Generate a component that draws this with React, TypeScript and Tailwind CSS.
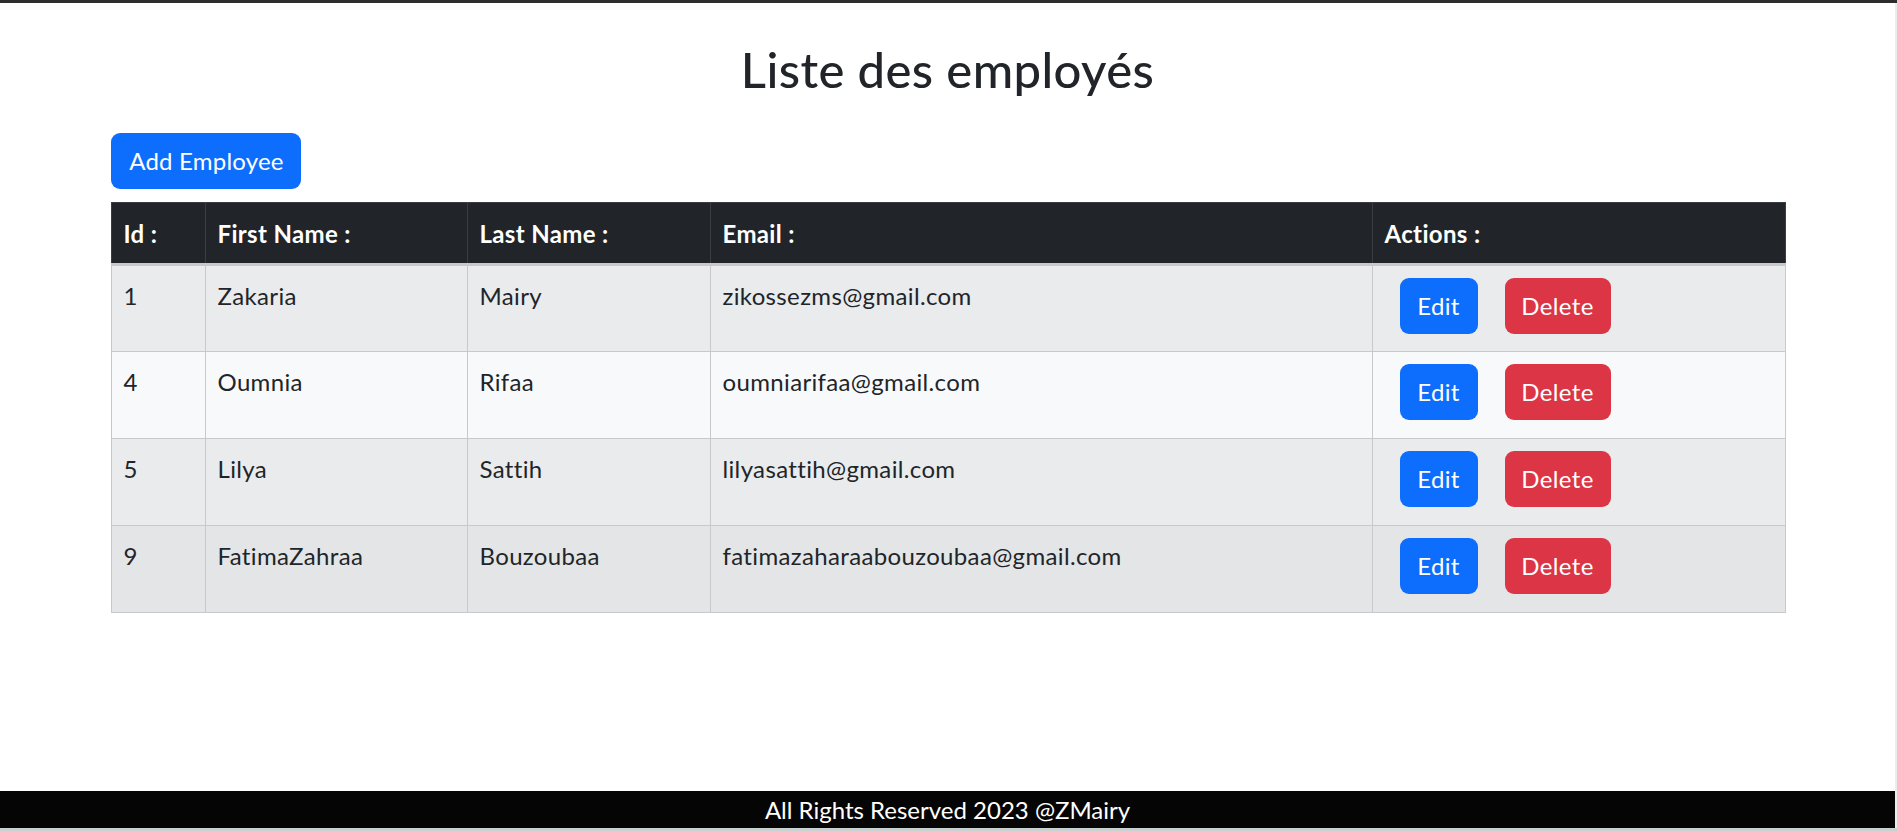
const employees = [
  { id: 1, firstName: "Zakaria", lastName: "Mairy", email: "zikossezms@gmail.com", bg: "bg-[#eaebed]" },
  { id: 4, firstName: "Oumnia", lastName: "Rifaa", email: "oumniarifaa@gmail.com", bg: "bg-[#f8f9fa]" },
  { id: 5, firstName: "Lilya", lastName: "Sattih", email: "lilyasattih@gmail.com", bg: "bg-[#eaebed]" },
  { id: 9, firstName: "FatimaZahraa", lastName: "Bouzoubaa", email: "fatimazaharaabouzoubaa@gmail.com", bg: "bg-[#e4e5e7]" },
];

const headers = ["Id :", "First Name :", "Last Name :", "Email :", "Actions :"];

export default function App() {
  return (
    <div className="flex h-[831px] w-[1897px] flex-col overflow-hidden bg-white font-['Lato',sans-serif] text-[24px] leading-[36px] tracking-[0.35px] text-[#212529]">
      <div className="h-[3px] bg-[#2d2d2d]" />
      <div className="flex flex-1">
        <div className="flex flex-1 flex-col">
          <h2 className="mt-[37px] text-center text-[49px] font-medium leading-[58px] tracking-[0.4px]">Liste des employés</h2>

          <div className="mx-auto mt-[35px] w-[1674px]">
            <button className="h-[56px] w-[190px] rounded-[9px] bg-[#0d6efd] pl-[2px] text-[24px] tracking-[0.2px] text-white">Add Employee</button>

            <table className="mt-[13px] w-full table-fixed border-collapse">
              <colgroup>
                <col className="w-[94px]" />
                <col className="w-[262px]" />
                <col className="w-[243px]" />
                <col className="w-[662px]" />
                <col className="w-[413px]" />
              </colgroup>
              <thead>
                <tr>
                  {headers.map((h) => (
                    <th
                      key={h}
                      className="h-[62px] border border-b-[3px] border-[#3a3e42] border-b-[#c8c9cb] bg-[#212529] px-3 pt-[1px] text-left align-middle font-bold text-white"
                    >
                      {h}
                    </th>
                  ))}
                </tr>
              </thead>
              <tbody>
                {employees.map((e) => (
                  <tr key={e.id} className={e.bg}>
                    <td className="h-[87px] border border-[#c8c9cb] px-3 pt-3 align-top">{e.id}</td>
                    <td className="border border-[#c8c9cb] px-3 pt-3 align-top">{e.firstName}</td>
                    <td className="border border-[#c8c9cb] px-3 pt-3 align-top">{e.lastName}</td>
                    <td className="border border-[#c8c9cb] px-3 pt-3 align-top">{e.email}</td>
                    <td className="border border-[#c8c9cb] px-3 pt-3 align-top">
                      <div className="flex">
                        <button className="ml-[15px] h-[56px] w-[78px] rounded-[9px] bg-[#0d6efd] text-white">Edit</button>
                        <button className="ml-[27px] h-[56px] w-[106px] rounded-[9px] bg-[#dc3545] text-white">Delete</button>
                      </div>
                    </td>
                  </tr>
                ))}
              </tbody>
            </table>
          </div>

          <div className="flex-1" />
          <footer className="h-[37px] bg-[#050505] text-center leading-[37px] tracking-normal text-white">All Rights Reserved 2023 @ZMairy</footer>
        </div>
        <div className="w-[2px] bg-[#ececec]" />
      </div>
      <div className="h-[3px] bg-[#c9d0d0]" />
    </div>
  );
}
